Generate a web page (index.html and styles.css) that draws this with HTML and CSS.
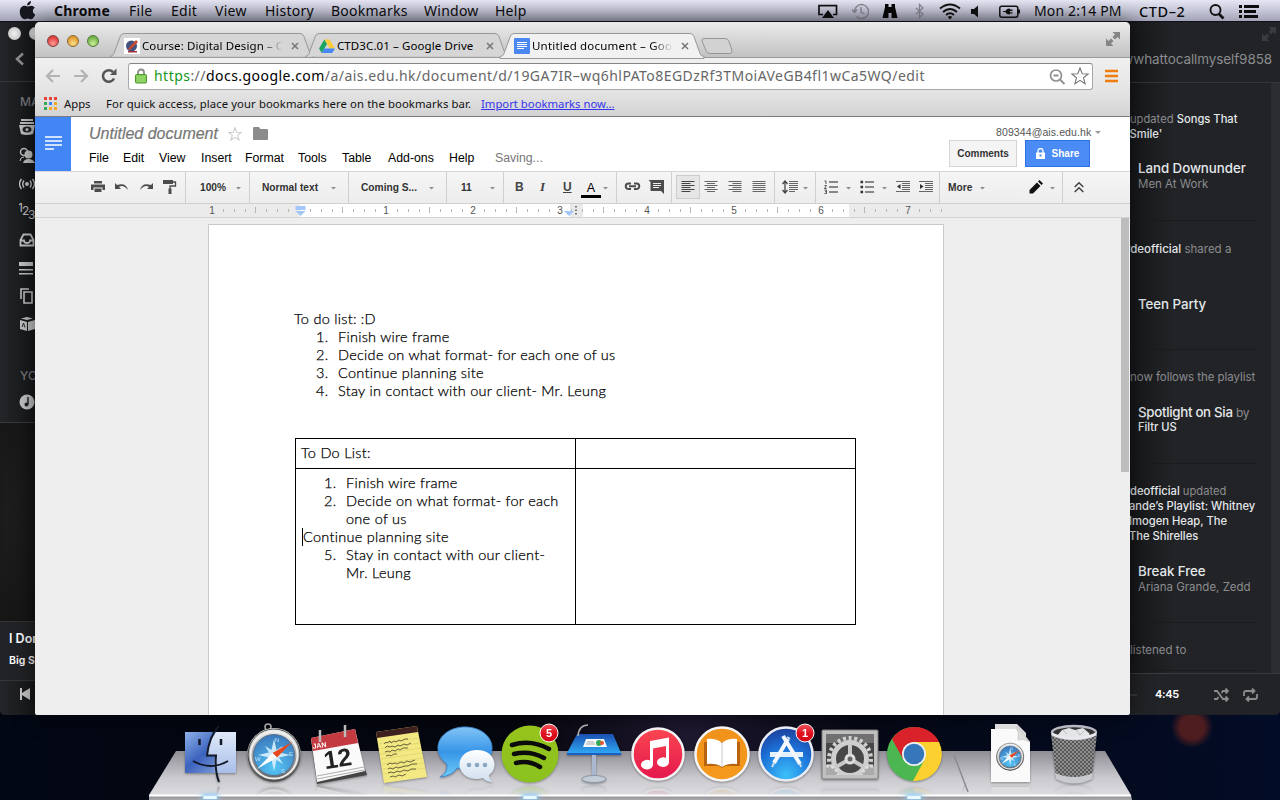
FILE: index.html
```html
<!DOCTYPE html>
<html lang="en">
<head>
<meta charset="utf-8">
<title>Untitled document</title>
<link rel="stylesheet" href="styles.css">
</head>
<body>
<svg class="defs" width="0" height="0">
  <defs>
    <linearGradient id="finder" x1="0" y1="0" x2="1" y2="1"><stop offset="0" stop-color="#8db0ea"/><stop offset=".45" stop-color="#3b63bd"/><stop offset="1" stop-color="#9fb7e6"/></linearGradient>
    <linearGradient id="finder2" x1="0" y1="0" x2="0" y2="1"><stop offset="0" stop-color="#dfe9f9"/><stop offset="1" stop-color="#a9bfe9"/></linearGradient>
    <linearGradient id="steel" x1="0" y1="0" x2="0" y2="1"><stop offset="0" stop-color="#f4f4f4"/><stop offset=".5" stop-color="#a5a5a5"/><stop offset="1" stop-color="#5c5c5c"/></linearGradient>
    <radialGradient id="compass" cx=".5" cy=".8" r=".8"><stop offset="0" stop-color="#55c6f7"/><stop offset="1" stop-color="#3b78bb"/></radialGradient>
    <linearGradient id="bubble" x1="0" y1="0" x2="0" y2="1"><stop offset="0" stop-color="#82c4f6"/><stop offset=".5" stop-color="#3795e8"/><stop offset="1" stop-color="#6fcdfa"/></linearGradient>
    <linearGradient id="bubble2" x1="0" y1="0" x2="0" y2="1"><stop offset="0" stop-color="#fff"/><stop offset="1" stop-color="#cfdfee"/></linearGradient>
    <linearGradient id="green" x1="0" y1="0" x2="0" y2="1"><stop offset="0" stop-color="#97c31c"/><stop offset="1" stop-color="#8bc21f"/></linearGradient>
    <linearGradient id="badge" x1="0" y1="0" x2="0" y2="1"><stop offset="0" stop-color="#f55a5f"/><stop offset=".5" stop-color="#e0101f"/><stop offset="1" stop-color="#d40b1a"/></linearGradient>
    <linearGradient id="desk" x1="0" y1="0" x2="0" y2="1"><stop offset="0" stop-color="#1a50b0"/><stop offset="1" stop-color="#2fa6f2"/></linearGradient>
    <linearGradient id="itunes" x1="0" y1="0" x2="0" y2="1"><stop offset="0" stop-color="#fb4650"/><stop offset="1" stop-color="#e4174e"/></linearGradient>
    <linearGradient id="books" x1="0" y1="0" x2="0" y2="1"><stop offset="0" stop-color="#f0921b"/><stop offset="1" stop-color="#f59a1c"/></linearGradient>
    <radialGradient id="store" cx=".5" cy=".9" r=".9"><stop offset="0" stop-color="#3cc0fb"/><stop offset=".6" stop-color="#1c6fd6"/><stop offset="1" stop-color="#1c3f9a"/></radialGradient>
    <pattern id="mesh" width="4" height="4" patternUnits="userSpaceOnUse"><rect width="4" height="4" fill="#3d3d3d"/><path d="M0 1q1-1 2 0t2 0M0 3q1 1 2 0t2 0" stroke="#b5b5b5" stroke-width=".9" fill="none"/></pattern>
    <pattern id="ticks" x="177" y="0" width="87" height="14" patternUnits="userSpaceOnUse"><path d="M11.500 5v3M22.500 5v3M33.500 5v3M54.500 5v3M65.500 5v3M76.500 5v3M43.500 3v6" stroke="#b5b5b5"/></pattern>
    <g id="safari">
      <circle cx="32" cy="33" r="27" fill="url(#steel)"/><circle cx="32" cy="33" r="26" fill="none" stroke="#4a4a4a"/><circle cx="32" cy="33" r="23.5" fill="none" stroke="#eee" stroke-width="2"/>
      <circle cx="32" cy="33" r="20.500" fill="url(#compass)" stroke="#5a6f86"/>
      <path d="M32 17l2.500 11 6.500-4-4 6.500 11 2.500-11 2.500 4 6.500-6.500-4-2.500 11-2.500-11-6.500 4 4-6.500-11-2.500 11-2.500-4-6.500 6.500 4z" fill="#d9f1fd" opacity=".9"/>
      <path d="M50 20L35 35.500l-4.500-4.500z" fill="#e8481c"/><path d="M28 47l0 0-1 1 8-12.500-4.500-4.500z" fill="#fff" opacity="0"/><path d="M15 47l15.500-16 4.500 4.500z" fill="#fff"/>
      <text x="35" y="20" font-size="6" fill="#bfe4fb" text-anchor="middle">N</text><text x="41" y="51" font-size="6" fill="#bfe4fb" text-anchor="middle">S</text><text x="13" y="39" font-size="6" fill="#bfe4fb">W</text><text x="47" y="34" font-size="6" fill="#bfe4fb">E</text>
    </g>
    <g id="drop"><path d="M0 0h5l-2.500 2.500z" fill="#8c8c8c"/></g>
  </defs>
</svg>

<header class="menubar">
  <svg width="17" height="20" viewBox="0 0 17 20"><path d="M12 0c0 3-2 4.500-4 4.500C8 2 10 .4 12 0zM8.500 5.500c1 0 2-.8 3.500-.8 1.600 0 3 .8 3.800 2-2.800 1.700-2.400 5.600.5 6.800-.7 2-2.300 4.700-4.100 4.700-1.300 0-1.700-.8-3.400-.8s-2.100.8-3.300.8C3 18.200.8 14.200.8 10.700.8 7 3.100 4.800 5.300 4.800c1.300 0 2.200.7 3.200.7z" fill="#16181f"/></svg>
  <b>Chrome</b><span>File</span><span>Edit</span><span>View</span><span>History</span><span>Bookmarks</span><span>Window</span><span>Help</span>
  <svg width="20" height="20" viewBox="0 0 20 20"><path d="M5 13.500H1V4.700h17.500v8.800h-3.500" fill="none" stroke="#111" stroke-width="1.700"/><path d="M10 9l6 8H4z" fill="#111"/></svg>
  <svg width="17" height="20" viewBox="0 0 17 20"><path d="M2.500 10.500a7 7 0 1 1 2 5M9 6v5l3.500 2M0 8.500l2.500 3 2.500-3" fill="none" stroke="#85868f" stroke-width="1.400"/></svg>
  <svg width="17" height="20" viewBox="0 0 17 20"><path d="M3 3h3.500v3h3V3H13v3l2.500 11h-6v-5h-3v5H.5L3 6z" fill="#080808"/></svg>
  <svg width="10" height="20" viewBox="0 0 10 20"><path d="M1 7l7 6-3.500 3.500v-13L8 7l-7 6" fill="none" stroke="#868792" stroke-width="1.200"/></svg>
  <svg width="22" height="20" viewBox="0 0 22 20"><path d="M1 7.500q10-8 20 0M4 11q7-6 14 0M7 14q4-3.500 8 0" fill="none" stroke="#111" stroke-width="2"/><path d="M8.800 16q2.200-2 4.400 0L11 18.500z" fill="#111"/></svg>
  <svg width="12" height="20" viewBox="0 0 12 20"><path d="M1 8h3l4-3.500v12L4 13H1z" fill="#111"/></svg>
  <svg width="23" height="20" viewBox="0 0 23 20"><rect x="1.800" y="5.200" width="18" height="11" rx="2" fill="none" stroke="#111" stroke-width="1.500"/><path d="M20 8.500h2v4h-2zM5 10h2.500q.5-2.500 4.500-2.500v1h2.500V10H12v1.300h2.500v1.200H12v1q-4 0-4.500-2.500H5z" fill="#111"/></svg>
  <span class="clock">Mon 2:14 PM</span><span class="user">CTD–2</span>
  <svg width="16" height="20" viewBox="0 0 16 20"><circle cx="6.500" cy="9" r="5" fill="none" stroke="#111" stroke-width="1.900"/><path d="M10 13l4.500 4.500" stroke="#111" stroke-width="2.600"/></svg>
  <svg width="22" height="20" viewBox="0 0 22 20"><path d="M1 5.500h3M1 10.500h3M1 15.500h3M6 5.500h15M6 10.500h12M6 15.500h14" stroke="#0b0b0b" stroke-width="3"/></svg>
</header>

<section class="player">
  <div class="side">
    <div class="side-head"><div class="dots"><i></i><i></i></div><svg width="10" height="14" viewBox="0 0 10 14"><path d="M8 1.500L2 7l6 5.500" fill="none" stroke="#8f8f90" stroke-width="2.500"/></svg></div>
    <nav class="side-nav">
      <span>MAIN</span>
      <svg viewBox="0 0 16 20"><path d="M2 2h12M1 5h14" stroke="#c3c4c5" stroke-width="2"/><path d="M0 7h16l-2 9q-6 2-12 0z" fill="#c3c4c5"/><ellipse cx="8" cy="11.500" rx="4.500" ry="3" fill="#222326"/><circle cx="8" cy="11.500" r="1.500" fill="#c3c4c5"/></svg>
      <svg viewBox="0 0 16 20"><circle cx="5" cy="6" r="3.500" fill="none" stroke="#c3c4c5" stroke-width="1.500"/><circle cx="9.500" cy="8.500" r="4" fill="#c3c4c5"/><path d="M1 15q0-4 4-4" fill="none" stroke="#c3c4c5"/><path d="M4 17q1-4 5.500-4t6.500 4z" fill="#c3c4c5"/></svg>
      <svg viewBox="0 0 16 20"><circle cx="8" cy="10" r="2" fill="#c3c4c5"/><path d="M5 6.500q-2.500 3.500 0 7M2.500 5q-4 5 0 10M11 6.500q2.500 3.500 0 7M13.500 5q4 5 0 10" fill="none" stroke="#c3c4c5" stroke-width="1.400"/></svg>
      <svg viewBox="0 0 16 20" class="digits"><text x="-1" y="10">1</text><text x="3" y="13">2</text><text x="9" y="17">3</text></svg>
      <svg viewBox="0 0 16 20"><path d="M1.500 15.500V10l3-5.500h7l3 5.500v5.500zM1.500 10.500H5q0 2.500 3 2.500t3-2.500h3.500" fill="none" stroke="#c3c4c5" stroke-width="1.800"/></svg>
      <svg viewBox="0 0 16 20"><path d="M0 4h14v4H0zM0 11h14v1.500H0zM0 15h14v1.500H0z" fill="#c3c4c5"/></svg>
      <svg viewBox="0 0 16 20"><path d="M5 6h8v11H5zM2 13V3h8" fill="none" stroke="#c3c4c5" stroke-width="1.600"/></svg>
      <svg viewBox="0 0 16 20"><path d="M1 6l7 2v9l-7-2zM9 8l7-2v9l-7 2zM2 4.500L8 3l6 1.500L8 6z" fill="#c3c4c5"/><path d="M3 13l1.500-4L6 13.500" stroke="#222326" fill="none"/></svg>
      <span class="yours">YOUR</span>
      <svg class="note" viewBox="0 0 16 20"><circle cx="8" cy="10" r="7.500" fill="#c3c4c5"/><path d="M9 5v7" stroke="#222326" stroke-width="1.500"/><circle cx="7.500" cy="12.500" r="2" fill="#222326"/></svg>
    </nav>
    <div class="art"></div>
    <div class="now"><b>I Don't</b><b class="artist">Big Sean</b></div>
    <div class="prev"><svg width="13" height="14" viewBox="0 0 13 14"><path d="M1 1h2v5l8-5v12L3 8v5H1z" fill="#c9c9c9"/></svg></div>
  </div>
  <div class="feed">
    <div class="feed-head">
      <svg width="14" height="14" viewBox="0 0 14 14"><path d="M6.500 0H14v7.500L11.500 5 9 7.500 6.500 5 9 2.500zM7.500 14H0V6.500L2.500 9 5 6.500 7.500 9 5 11.500z" fill="#3a3b3e"/></svg>
      <p>wwhattocallmyself9858</p>
    </div>
    <div class="feed-list">
      <article class="f1"><p>updated <b>Songs That</b></p><p><b class="cut">'Smile'</b></p><h3>Land Downunder</h3><p class="by">Men At Work</p></article>
      <article class="f2"><p><b class="cut">rdeofficial</b> shared a</p><h3>Teen Party</h3></article>
      <article class="f3"><p>now follows the playlist</p><h3>Spotlight on Sia <small>by</small></h3><p class="by"><b>Filtr US</b></p></article>
      <article class="f4"><p><b class="cut">rdeofficial</b> updated</p><p><b class="near">ande’s Playlist: Whitney</b></p><p><b class="near">Imogen Heap, The</b></p><p><b class="near">The Shirelles</b></p><h3>Break Free</h3><p class="by">Ariana Grande, Zedd</p></article>
      <article class="f5"><p>listened to</p></article>
    </div>
    <div class="feed-foot"><i></i><b>4:45</b>
      <svg width="15" height="14" viewBox="0 0 15 14"><path d="M0 3h3l6 8h5M0 11h3l1.500-2M7.500 5L9 3h5M11.500.5L14 3l-2.500 2.500M11.500 8.500L14 11l-2.500 2.500" fill="none" stroke="#8b8c8e" stroke-width="1.800"/></svg>
      <svg width="15" height="14" viewBox="0 0 15 14"><path d="M1 8V5q0-2 2-2h8M14 6v3q0 2-2 2H4M9 .5L11.500 3 9 5.500M6 8.500L3.500 11 6 13.500" fill="none" stroke="#8b8c8e" stroke-width="1.800"/></svg>
    </div>
  </div>
</section>

<main class="browser">
  <div class="tabstrip">
    <div class="lights"><i class="red"></i><i class="amber"></i><i class="lime"></i></div>
    <div class="tab">
      <svg class="shape" viewBox="0 0 204 24"><path d="M0 23.500q3 0 4-3L10 4q1-3.500 4-3.500h176q3 0 4 3L200 20.500q1 3 4 3"/></svg>
      <svg width="16" height="16" viewBox="0 0 16 16"><path d="M0 0h16v16H0z" fill="#fff"/><circle cx="7.500" cy="8" r="5.500" fill="#44537d"/><path d="M4 11L12 2l2 2-8 8z" fill="#c94a31"/><path d="M4 13h9v1.500H4z" fill="#a32d33"/></svg>
      <span class="fade">Course: Digital Design – CTD</span><svg class="x" viewBox="0 0 8 8"><path d="M1 1l6 6M7 1L1 7"/></svg>
    </div>
    <div class="tab">
      <svg class="shape" viewBox="0 0 204 24"><path d="M0 23.500q3 0 4-3L10 4q1-3.500 4-3.500h176q3 0 4 3L200 20.500q1 3 4 3"/></svg>
      <svg width="16" height="16" viewBox="0 0 16 16"><path d="M5.300 1.500h5.400L16 10.500h-5.300z" fill="#fbc93c"/><path d="M5.300 1.500L8 6.200 2.700 15 0 10.500z" fill="#1da463"/><path d="M5.300 10.500H16L13.300 15H2.700z" fill="#4687f4"/></svg>
      <span>CTD3C.01 – Google Drive</span><svg class="x" viewBox="0 0 8 8"><path d="M1 1l6 6M7 1L1 7"/></svg>
    </div>
    <div class="tab on">
      <svg class="shape" viewBox="0 0 204 25"><path d="M0 23.500q3 0 4-3L10 4q1-3.500 4-3.500h176q3 0 4 3L200 20.500q1 3 4 3v2H0z"/></svg>
      <svg width="16" height="16" viewBox="0 0 16 16"><rect width="16" height="16" rx="1" fill="#4b87f3"/><path d="M3 4.500h10M3 6.500h10M3 8.500h10M3 10.500h7" stroke="#fff" stroke-width="1.200"/></svg>
      <span class="fade">Untitled document – Google</span><svg class="x" viewBox="0 0 8 8"><path d="M1 1l6 6M7 1L1 7"/></svg>
    </div>
    <svg class="newtab" width="32" height="16" viewBox="0 0 32 16"><path d="M3 .5h21q3 0 4 3l3 9q.5 3-2 3H9q-3 0-4-3L1 3q-.5-2.500 2-2.500z" fill="#d2d2d2" stroke="#959595"/></svg>
    <svg class="full" width="14" height="14" viewBox="0 0 14 14"><path d="M6.500 0H14v7.500L11.500 5 9 7.500 6.500 5 9 2.500zM7.500 14H0V6.500L2.500 9 5 6.500 7.500 9 5 11.500z" fill="#858585"/></svg>
  </div>

  <div class="navbar">
    <svg width="16" height="14" viewBox="0 0 16 14"><path d="M8 1L2 7l6 6M2.500 7H15" fill="none" stroke="#b3b3b3" stroke-width="2.200"/></svg>
    <svg width="16" height="14" viewBox="0 0 16 14"><path d="M8 1l6 6-6 6M13.500 7H1" fill="none" stroke="#b3b3b3" stroke-width="2.200"/></svg>
    <svg width="16" height="16" viewBox="0 0 16 16"><path d="M13 10.500A5.800 5.800 0 1 1 12 4" fill="none" stroke="#555" stroke-width="2.600"/><path d="M15.500.5V7H9z" fill="#555"/></svg>
    <div class="omnibox">
      <svg width="12" height="16" viewBox="0 0 12 16"><path d="M3 8V4.500a3 3 0 0 1 6 0V8" fill="none" stroke="#8b8b8b" stroke-width="1.800"/><rect x=".5" y="6.500" width="11" height="8.500" rx="1" fill="#82cc57" stroke="#4d9a2e"/><path d="M2 9h8M2 11h8M2 13h8" stroke="#a6e080" stroke-width=".8"/></svg>
      <p><em>https</em>://<strong>docs.google.com</strong>/a/ais.edu.hk/document/d/19GA7IR–wq6hlPATo8EGDzRf3TMoiAVeGB4fl1wCa5WQ/edit</p>
      <svg width="17" height="17" viewBox="0 0 17 17"><circle cx="7" cy="7.500" r="5.500" fill="none" stroke="#909090" stroke-width="1.700"/><path d="M4.500 7.500h5M11 11.500l4.500 4.500" stroke="#909090" stroke-width="1.800"/></svg>
      <svg width="18" height="18" viewBox="0 0 18 18"><path d="M9 1l2.200 5.700 6 .3-4.700 3.800 1.600 6L9 13.400l-5.100 3.400 1.600-6L.8 7l6-.3z" fill="#fff" stroke="#777" stroke-width="1.100"/></svg>
    </div>
    <svg width="14" height="14" viewBox="0 0 14 14"><path d="M0 2h13M0 7h13M0 12h13" stroke="#ef7d0f" stroke-width="2.600"/></svg>
  </div>

  <div class="bookmarks">
    <svg width="13" height="13" viewBox="0 0 13 13"><path d="M0 0h3v3H0zM5 0h3v3H5zM10 0h3v3h-3z" fill="#ea4335"/><path d="M0 5h3v3H0zM0 10h3v3H0z" fill="#34a853"/><path d="M5 5h3v3H5z" fill="#4285f4"/><path d="M10 5h3v3h-3zM5 10h3v3H5zM10 10h3v3h-3z" fill="#f9a825"/></svg>
    <span>Apps</span><span class="hint">For quick access, place your bookmarks here on the bookmarks bar.</span><a>Import bookmarks now...</a>
  </div>

  <div class="docs-head">
    <div class="docs-logo"><svg width="18" height="14" viewBox="0 0 18 14"><path d="M0 1h17M0 5h17M0 9h17M0 13h9" stroke="#fff" stroke-width="1.700"/></svg></div>
    <div class="docs-mid">
      <div class="title"><i>Untitled document</i>
        <svg width="14" height="14" viewBox="0 0 18 18"><path d="M9 1l2.200 5.700 6 .3-4.700 3.800 1.600 6L9 13.400l-5.100 3.400 1.600-6L.8 7l6-.3z" fill="#fff" stroke="#c9c9c9" stroke-width="1.300"/></svg>
        <svg width="15" height="13" viewBox="0 0 15 13"><path d="M1 0h5l1.500 2H14q1 0 1 1v9q0 1-1 1H1q-1 0-1-1V1q0-1 1-1z" fill="#8c8c8c"/></svg></div>
      <nav class="menus"><span>File</span><span>Edit</span><span>View</span><span>Insert</span><span>Format</span><span>Tools</span><span>Table</span><span>Add-ons</span><span>Help</span><span class="saving">Saving...</span></nav>
    </div>
    <div class="docs-right">
      <div class="account">809344@ais.edu.hk <svg width="6" height="3"><path d="M0 0h6L3 3z" fill="#999"/></svg></div>
      <div class="buttons"><button class="comments">Comments</button><button class="share"><svg width="9" height="11" viewBox="0 0 9 11"><path d="M2 5V3a2.500 2.500 0 0 1 5 0v2" fill="none" stroke="#fff" stroke-width="1.300"/><path d="M0 4.500h9V11H0z" fill="#fff"/><path d="M3.500 6.500h2v2h-2z" fill="#4886ee"/></svg>Share</button></div>
    </div>
  </div>

  <div class="toolbar">
    <div class="g g1">
      <svg viewBox="0 0 14 14"><path d="M3 1h8v2.500H3zM0 4.500h14V10h-2.500V7.500h-9V10H0zM3.500 8.500h7V12h-7z" fill="#4c4c4c"/></svg>
      <svg viewBox="0 0 14 14"><path d="M0 3v6h6L4 7q4-3 9 3-2-8-11-5z" fill="#4c4c4c"/></svg>
      <svg viewBox="0 0 14 14"><path d="M14 3v6H8l2-2q-4-3-9 3 2-8 11-5z" fill="#4c4c4c"/></svg>
      <svg viewBox="0 0 14 14"><path d="M0 0h10v4H0z" fill="#4c4c4c"/><path d="M10 2h2.500v4H7v3" fill="none" stroke="#4c4c4c" stroke-width="1.300"/><path d="M5.500 8.500h3V14h-3z" fill="#4c4c4c"/></svg>
    </div>
    <div class="g g2"><b>100%</b><svg class="dd"><use href="#drop"/></svg></div>
    <div class="g g3"><b>Normal text</b><svg class="dd"><use href="#drop"/></svg></div>
    <div class="g g4"><b>Coming S...</b><svg class="dd"><use href="#drop"/></svg></div>
    <div class="g g5"><b>11</b><svg class="dd"><use href="#drop"/></svg></div>
    <div class="g g6"><b>B</b><i>I</i><u>U</u><span class="colour">A</span><svg class="dd"><use href="#drop"/></svg></div>
    <div class="g g7">
      <svg width="17" height="14" viewBox="0 0 17 14"><path d="M7 3.500H4.500a2.500 2.500 0 0 0 0 5.500H7M10 3.500h2.500a2.500 2.500 0 0 1 0 5.500H10M5 6.300h7" fill="none" stroke="#4c4c4c" stroke-width="2"/></svg>
      <svg width="16" height="14" viewBox="0 0 16 14"><path d="M0 0h15.500v14L12.500 11H2V2z" fill="#4c4c4c"/><path d="M4.500 3.500h8M4.500 5.500h8M4.500 7.500h6" stroke="#eee"/></svg>
    </div>
    <div class="g g8">
      <span class="pressed"><svg viewBox="0 0 14 14"><path d="M.5 1.500h13M.5 3.500h9M.5 5.500h13M.5 7.500h9M.5 9.500h13M.5 11.500h9" stroke="#444"/></svg></span>
      <svg viewBox="0 0 14 14"><path d="M.5 1.500h13M3 3.500h8M.5 5.500h13M3 7.500h8M.5 9.500h13M3 11.500h8" stroke="#666"/></svg>
      <svg viewBox="0 0 14 14"><path d="M.5 1.500h13M4.500 3.500h9M.5 5.500h13M4.500 7.500h9M.5 9.500h13M4.500 11.500h9" stroke="#666"/></svg>
      <svg viewBox="0 0 14 14"><path d="M.5 1.500h13M.5 3.500h13M.5 5.500h13M.5 7.500h13M.5 9.500h13M.5 11.500h13" stroke="#666"/></svg>
    </div>
    <div class="g g9"><svg width="16" height="14" viewBox="0 0 16 14"><path d="M3 2v10M.5 4L3 1l2.500 3M.5 10L3 13l2.500-3" fill="none" stroke="#444" stroke-width="1.300"/><path d="M7 1.500h9M7 3.500h9M7 5.500h9M7 7.500h9M7 9.500h9M7 11.500h6" stroke="#666"/></svg><svg class="dd"><use href="#drop"/></svg></div>
    <div class="g g10">
      <svg viewBox="0 0 14 14"><path d="M5 2h9M5 7h9M5 12h9" stroke="#666" stroke-width="1.500"/><path d="M.5 1H2v3M.5 5.500h2l-2 3h2M.5 10h2v3.500h-2M1 11.700h1.500" stroke="#444" fill="none" stroke-width=".9"/></svg><svg class="dd"><use href="#drop"/></svg>
      <svg viewBox="0 0 14 14"><path d="M5 2h9M5 7h9M5 12h9" stroke="#666" stroke-width="1.500"/><path d="M.5 .7h2.600v2.600H.5zM.5 5.700h2.600v2.600H.5zM.5 10.700h2.600v2.600H.5z" fill="#333"/></svg><svg class="dd"><use href="#drop"/></svg>
      <svg viewBox="0 0 14 14"><path d="M0 1.500h14M6 3.500h8M6 5.500h8M6 7.500h8M6 9.500h8M0 11.500h14" stroke="#666"/><path d="M4.500 4v5L1 6.500z" fill="#333"/></svg>
      <svg viewBox="0 0 14 14"><path d="M0 1.500h14M6 3.500h8M6 5.500h8M6 7.500h8M6 9.500h8M0 11.500h14" stroke="#666"/><path d="M1 4v5l3.500-2.500z" fill="#333"/></svg>
    </div>
    <div class="g g11"><b>More</b><svg class="dd"><use href="#drop"/></svg>
      <svg class="pencil" viewBox="0 0 14 14"><path d="M.5 10l7.500-7.500 3.500 3.500L4 13.500H.5zM9 1.500L10.500 0l3.500 3.500L12.500 5z" fill="#111"/></svg><svg class="dd"><use href="#drop"/></svg></div>
    <div class="g g12"><svg width="10" height="12" viewBox="0 0 10 12"><path d="M.7 6L5 1.700 9.300 6M.7 11L5 6.700 9.300 11" fill="none" stroke="#444" stroke-width="1.500"/></svg></div>
  </div>

  <svg class="ruler" width="1095" height="14" viewBox="0 0 1095 13">
    <path d="M265 0h270v13H265zM548 0h266v13H548z" fill="#fff"/><path d="M535 0h13v13h-13z" fill="#e9e9e9"/>
    <rect x="177" width="731" height="13" fill="url(#ticks)"/>
    <g><text x="177" y="9.500">1</text><text x="351" y="9.500">1</text><text x="438" y="9.500">2</text><text x="525" y="9.500">3</text><text x="612" y="9.500">4</text><text x="699" y="9.500">5</text><text x="786" y="9.500">6</text><text x="873" y="9.500">7</text></g>
    <path d="M260.500 2h10v4h-10zM260.500 7h10l-5 5zM529 7h10l-5 5z" fill="#a3c7f8"/><path d="M541 2v10" stroke="#777" stroke-width="2" stroke-dasharray="1.500 2"/>
  </svg>

  <div class="canvas">
    <div class="page">
      <p>To do list: :D</p>
      <ol><li>Finish wire frame</li><li>Decide on what format- for each one of us</li><li>Continue planning site</li><li>Stay in contact with our client- Mr. Leung</li></ol>
      <table>
        <tr class="r1"><td><p>To Do List:</p></td><td></td></tr>
        <tr class="r2"><td><ol><li>Finish wire frame</li><li>Decide on what format- for each<br>one of us</li></ol><p class="caret">Continue planning site</p><ol start="5"><li>Stay in contact with our client-<br>Mr. Leung</li></ol></td><td></td></tr>
      </table>
    </div>
    <div class="thumb"></div>
  </div>
</main>

<footer class="dock">
  <div class="shelf"></div>
  <div class="apps">
    <svg viewBox="0 0 64 64"><rect x="7" y="10" width="51" height="41" fill="url(#finder)"/><path d="M38 10h20v41H37q-1-8 0-17h-8q1-14 9-24z" fill="url(#finder2)"/><path d="M41 4C32 13 30 25 29 33.500h9C37 44 38 52 41 60M15 39q18 10 35 0" fill="none" stroke="#111827" stroke-width="2"/><path d="M21.500 17v6M43 17v6" stroke="#111827" stroke-width="2.500"/></svg>
    <svg viewBox="0 0 64 64"><circle cx="26" cy="5" r="3" fill="none" stroke="#aaa" stroke-width="1.500"/><use href="#safari"/></svg>
    <svg viewBox="0 0 64 64"><path d="M5 18l6 44 50-9-2-6z" fill="#444"/><path d="M5 16L49 7l10 42-48 11z" fill="#fafafa"/><path d="M5 16L49 7l3 14L7 29z" fill="#c33a40"/><path d="M11 54l47-9M11 57l47-9" stroke="#999" stroke-width=".8"/><path d="M14 20V8M39 15V3" stroke="#bbb" stroke-width="2.500"/><g transform="rotate(-9 32 32)"><text x="8" y="23" font-size="7" font-weight="bold" fill="#fff">JAN</text><text x="31" y="45" font-size="25" font-weight="bold" fill="#222" text-anchor="middle">12</text></g></svg>
    <svg viewBox="0 0 64 64"><path d="M6 10l41-6 10 51-43 6z" fill="#f3e982"/><path d="M6 10l41-6 1 6L7 16z" fill="#3e211e"/><path d="M8 22l41-6M9 27l41-6M10 32l41-6M11 37l41-6M12 42l41-6M13 47l41-6M13 52l42-6" stroke="#d3c46a" stroke-width=".5"/><path d="M14 22l2-2 1 1 3-2 1 2 3-2 2 1 3-2 2 1 4-2 3 0M15 26l2-2 3 1 2-1 3 1 3-2 2 1 4-2 3 1 4-2M15 30l3-1 2 1 2-2 3 1 3-2 2 1 3-2 5 0M16 34l3-1 2 1 3-2 3 0M17 43l3-2 2 1 3-1 2 1 4-2 3 1 3-2 3 1 5-2M18 47l2-1 3 1 3-2 2 1 4-1 3-1 3 0 4-2 5 0M18 51l3-1 3 1 3-2 3 1 4-2 4 1 3-2 5 0M20 55l3-1 2 1 4-2 3 1 4-2" fill="none" stroke="#5b5436" stroke-width=".9"/></svg>
    <svg viewBox="0 0 64 64"><path d="M31 5c15 0 27 9 27 21S46 47 31 47q-4 0-8-1-5 8-17 9 8-4 7-13C7 38 4 32 4 26 4 14 16 5 31 5z" fill="url(#bubble)" stroke="#438ad0"/><path d="M43 28c10 0 17.500 6 17.500 14.500 0 5-2 8-5.500 10.500q0 4 4 7-7 0-10-4-3 1-6 1c-10 0-17.500-6-17.500-14.500S33 28 43 28z" fill="url(#bubble2)"/><g fill="#89a8c6"><circle cx="35" cy="43" r="2.300"/><circle cx="43" cy="43" r="2.300"/><circle cx="51" cy="43" r="2.300"/></g></svg>
    <svg viewBox="0 0 64 64"><circle cx="32" cy="32" r="28.500" fill="url(#green)"/><path d="M14 23q19-6 37 4M16 32q16-4 30 4M18 41q13-3 24 4" fill="none" stroke="#0b0b0b" stroke-linecap="round" stroke-width="4.500"/><circle cx="51" cy="11" r="9" fill="url(#badge)" stroke="#fff"/><text x="51" y="15" font-size="11" font-weight="bold" fill="#fff" text-anchor="middle">5</text></svg>
    <svg viewBox="0 0 64 64"><path d="M30 31h4v26h-4z" fill="#a9b8cf"/><ellipse cx="32" cy="57" rx="12" ry="3.500" fill="#c4ccd8" stroke="#8c98aa"/><path d="M15 12h36l8 19H5z" fill="url(#desk)"/><path d="M5 31h54v2H5z" fill="#1b5fc0"/><path d="M24 17h18l3 8H21z" fill="#f3f8ff"/><circle cx="37" cy="21" r="3" fill="#35a853"/><circle cx="40" cy="21" r="2" fill="#ea5535"/><path d="M24 22h9M25 20h7" stroke="#aaa"/><path d="M16 14q1-11 10-11" fill="none" stroke="#aaa" stroke-width="1.700"/></svg>
    <svg viewBox="0 0 64 64"><circle cx="32" cy="32" r="25.500" fill="url(#itunes)" stroke="#f2f2f4" stroke-width="2.500"/><path d="M24 19l19-3.500v25a6 4.800 0 1 1-3-4.500V24l-13 2.500V43a6 4.800 0 1 1-3-4.500z" fill="#fff"/></svg>
    <svg viewBox="0 0 64 64"><circle cx="32" cy="32" r="26.500" fill="url(#books)" stroke="#f5f5f5" stroke-width="2.500"/><path d="M14 20v24h15l3 2 3-2h15V20z" fill="#b8640e"/><path d="M32 21q-6-5-15-4v25q9-1 15 3 6-4 15-3V17q-9-1-15 4z" fill="#fff"/><path d="M32 21v24" stroke="#c8c8c8"/></svg>
    <svg viewBox="0 0 64 64"><circle cx="32" cy="32" r="26.500" fill="url(#store)" stroke="#e9edf3" stroke-width="2.500"/><path d="M16 30h33v5H16z" fill="#e4effc"/><path d="M34 17L20 41M29 14l17 28" stroke="#f4f8fe" stroke-width="4"/><path d="M33 15l3 2M20 41l-2 4M46 42l1 3" stroke="#cde" stroke-width="2"/><circle cx="51" cy="11" r="9" fill="url(#badge)" stroke="#fff"/><text x="51" y="15" font-size="11" font-weight="bold" fill="#fff" text-anchor="middle">1</text></svg>
    <svg viewBox="0 0 64 64"><rect x="4" y="8" width="56" height="49" rx="1" fill="#bfbfbf" stroke="#7d7d7d"/><rect x="8" y="12" width="48" height="41" fill="#474747"/><path d="M8 12h48v9H8z" fill="#707070"/><svg x="8" y="12" width="48" height="41" viewBox="8 12 48 41"><circle cx="32" cy="37" r="21" fill="none" stroke="#d0d0d0" stroke-width="4" stroke-dasharray="3 2.700"/><circle cx="32" cy="37" r="16.500" fill="none" stroke="#cfcfcf" stroke-width="5"/><path d="M32 37V22M32 37l-14 8M32 37l14 8" stroke="#c8c8c8" stroke-width="4"/><circle cx="32" cy="37" r="5.500" fill="#ddd"/><circle cx="32" cy="37" r="2.500" fill="#666"/><circle cx="10" cy="54" r="10" fill="#aaa" stroke="#ddd" stroke-width="3" stroke-dasharray="3 2"/><circle cx="54" cy="54" r="10" fill="#aaa" stroke="#ddd" stroke-width="3" stroke-dasharray="3 2"/></svg></svg>
    <svg viewBox="0 0 64 64"><circle cx="32" cy="32" r="27" fill="#4cb750"/><path d="M32 5a27 27 0 0 1 25 15H32L21.600 38 10 17A27 27 0 0 1 32 5z" fill="#d9222a"/><path d="M57 20a27 27 0 0 1-26 39L42.400 38 43 26 32 20z" fill="#fcd02f"/><circle cx="32" cy="32" r="12" fill="#f2f2f2"/><circle cx="32" cy="32" r="10.300" fill="#3676bb"/></svg>
    <svg class="divider" viewBox="0 0 32 64"><path d="M8 33l14 37" stroke="#8c8c90" stroke-width="1.500"/></svg>
    <svg viewBox="0 0 64 64"><path d="M17 2h22l9 9v44H17z" fill="#ddd"/><path d="M13 7h24l15 13v40H13z" fill="#fafafa"/><path d="M39 4l13 16q-7-4-12-2 1-7-1-14z" fill="#dcdcdc" stroke="#bbb" stroke-width=".6"/><g transform="translate(15.500 17.500) scale(.52)"><use href="#safari"/></g></svg>
    <svg viewBox="0 0 64 64"><path d="M9 12l5 43q18 10 36 0l5-43z" fill="url(#mesh)"/><path d="M13 51q19 8 38 0l-1 6q-18 9-36 0z" fill="#c9c9d0"/><ellipse cx="32" cy="10.500" rx="22" ry="6.500" fill="#333" stroke="#b9b9c4" stroke-width="2.500"/><path d="M15 14l5-6 7-2 6 2 8-2 6 5 1 3q-16 5-33 0z" fill="#e3e5e6"/><path d="M21 8l4 4M34 8l4 5 4-4" stroke="#bbb" fill="none"/><path d="M10 12q22 9 44 0" stroke="#e9e9ef" stroke-width="2.500" fill="none"/></svg>
  </div>
  <div class="running"><i></i><i></i><i></i></div>
</footer>
</body>
</html>
```
FILE: styles.css
```css
* { box-sizing: border-box; }
body {
  margin: 0; width: 1280px; height: 800px; overflow: hidden; position: relative;
  background: radial-gradient(circle at 1192px 727px, #4d1d20 0 12px, transparent 21px),
    radial-gradient(ellipse at 690px 735px, #1f1830, transparent 170px), linear-gradient(90deg, #020714, #06070d 50%, #030c26);
  font-family: "Liberation Sans", Arial, sans-serif;
}
p, h3, ol { margin: 0; padding: 0; }
svg { display: block; flex: none; }
.defs { position: absolute; }

/* Menu bar */
.menubar {
  height: 22px; padding-left: 19px; display: grid; align-items: center;
  grid-template-columns: 35px 75px 42px 44px 50px 66px 93px 71px 323px 34px 30px 33px 24px 31px 28px 36px 105px 70px 29px 22px;
  background: linear-gradient(#e6e6f4, #c5c6d7 50%, #a2a3b6); border-bottom: 1px solid #10111a;
  font: 14px/20px "Noto Sans", sans-serif; color: #0c0c0e; letter-spacing: .25px; white-space: nowrap;
}
.menubar b { letter-spacing: .2px; }
.menubar .clock { letter-spacing: .15px; }
.menubar .user { font-weight: 500; font-size: 14.500px; letter-spacing: .6px; }

/* Music player window */
.player {
  position: absolute; left: 0; top: 22px; width: 1280px; height: 693px; background: #222326;
  display: flex; justify-content: space-between; border-radius: 0 0 5px 5px; overflow: hidden;
  font-family: Inter, sans-serif;
}
.side { width: 35px; overflow: hidden; background: linear-gradient(90deg, #242528, #17181a); }
.side-head { height: 60px; border-bottom: 1px solid #343538; padding: 5px 0 0 8px; }
.side-head > svg { margin: 12px 0 0 7px; }
.dots { display: flex; gap: 8px; width: 40px; }
.dots i { flex: none; width: 13px; height: 13px; border-radius: 50%; background: radial-gradient(circle, #f4f4f4, #bcbcbc); }
.side-nav { height: 341px; padding: 13px 0 0 19px; border-bottom: 1px solid #3a3a3a; }
.side-nav span { display: block; font: 500 12px/14px Inter, sans-serif; color: #77787b; margin-bottom: 9px; padding-left: 1px; }
.side-nav svg { width: 16px; height: 20px; margin-bottom: 8px; }
.side-nav .yours { margin: 35px 0 9px; }
.digits text { font: 12px Inter, sans-serif; fill: #c3c4c5; }
.art { height: 198px; background: radial-gradient(ellipse at 10px 90px, #1d1d1d, #060606 90px); }
.now { height: 59px; background: #222326; color: #fff; border-top: 1px solid #333; padding: 8px 0 0 9px; white-space: nowrap; font-size: 12.500px; line-height: 18px; }
.now b { display: block; font-weight: 600; }
.now .artist { font-size: 10.500px; line-height: 26px; }
.prev { border-top: 1px solid #353639; padding: 6px 0 0 19px; height: 35px; }

.feed { width: 150px; overflow: hidden; color: #8b8c8f; font-size: 11.500px; line-height: 15px; white-space: nowrap; background: linear-gradient(90deg, #17181a, #222326 45px); }
.feed-head { height: 61px; border-bottom: 1px solid #343538; padding-top: 5px; }
.feed-head svg { margin-left: 132px; }
.feed-head p { margin: 10px 0 0 -8px; width: 150px; font-size: 13.500px; letter-spacing: -.1px; line-height: 16px; text-align: right; }
.feed-list { height: 590px; border-right: 9px solid #2c2d30; }
.feed article { border-bottom: 1px solid #1a1b1d; width: 127px; }
.feed b { color: #e4e8ea; font-weight: 500; }
.feed .cut { margin-left: -4px; }
.feed .near { margin-left: -1px; }
.feed h3 { font: 500 13.300px/18px Inter, sans-serif; color: #e4e8ea; margin-left: 8px; letter-spacing: -.05px; }
.feed small { font-size: 12px; font-weight: 400; color: #8b8c8f; }
.feed .by { margin-left: 8px; font-size: 11.500px; }
.f1 { height: 138px; padding-top: 29px; font-size: 11.200px; }
.f1 h3 { margin-top: 17px; }
.f2 { height: 129px; padding-top: 21px; font-size: 11.500px; }
.f2 h3 { margin-top: 38px; }
.f3 { height: 114px; padding-top: 20px; letter-spacing: -.05px; }
.f3 h3 { margin-top: 18px; letter-spacing: -.3px; }
.feed .f3 .by { margin-top: -2px; font-size: 11.200px; }
.f4 { height: 159px; padding-top: 20px; font-size: 11.200px; }
.f4 h3 { margin-top: 18px; }
.f5 { height: 48px; padding-top: 20px; border: 0; }
.feed-foot { height: 42px; border-top: 1px solid #3a3b3e; display: flex; align-items: center; background: #222326; }
.feed-foot i { width: 7px; height: 2px; background: #393a3d; margin-right: 18px; }
.feed-foot b { width: 59px; color: #fff; font-size: 11px; font-weight: 600; letter-spacing: -.3px; }
.feed-foot svg + svg { margin-left: 14px; }

/* Browser window */
.browser {
  position: absolute; left: 35px; top: 22px; width: 1095px; height: 693px; overflow: hidden;
  border-radius: 5px 5px 3px 3px; background: #eee; box-shadow: 0 0 22px rgba(0,0,0,.6);
  display: flex; flex-direction: column;
}
.tabstrip { height: 36px; flex: none; display: flex; align-items: flex-end; background: linear-gradient(#ebebeb, #c2c2c2); border-bottom: 1px solid #9a9a9a; }
.lights { display: flex; gap: 8px; padding: 0 11px 10px 12px; width: 79px; flex: none; }
.lights i { width: 12px; height: 12px; flex: none; border-radius: 50%; border: 1px solid #7c4443; }
.red { background: radial-gradient(circle at 50% 75%, #ff9d95, #df3c3c 70%); }
.lights .amber { background: radial-gradient(circle at 50% 75%, #ffe08a, #dd9a2f 70%); border-color: #886832; }
.lights .lime { background: radial-gradient(circle at 50% 75%, #cdf19a, #6fb045 70%); border-color: #55793c; }
.tab { position: relative; width: 203px; height: 24px; margin: 0 -4px; padding-left: 14px; display: flex; align-items: center; flex: none; font: 11.500px/16px "Noto Sans", sans-serif; letter-spacing: .1px; }
.tab > * { position: relative; top: 1px; }
.tab .shape { position: absolute; left: 0; top: 0; width: 204px; height: 24px; fill: #d6d6d6; stroke: #989898; overflow: visible; }
.tab.on { z-index: 1; margin-bottom: -1px; height: 25px; letter-spacing: .2px; }
.tab.on > :not(.shape) { top: 0; }
.tab.on .shape { fill: #f1f1f1; height: 25px; }
.tab span { width: 143px; padding-left: 2px; margin-right: 8px; white-space: nowrap; overflow: hidden; }
.fade { mask-image: linear-gradient(90deg, #000 85%, transparent); }
.x { width: 8px; height: 8px; stroke: #777; stroke-width: 1.500; }
.newtab { margin: 0 0 3px 2px; }
.full { margin: 0 10px 11px auto; }

.navbar { height: 36px; flex: none; display: flex; align-items: center; padding: 0 11px 0 10px; background: linear-gradient(#f0f0f0, #e3e3e3); }
.navbar > svg { margin-right: 12px; }
.omnibox { flex: 1; height: 27px; margin-left: -1px; background: #fff; border: 1px solid #a8a8a8; border-top-color: #858585; border-radius: 3px; display: flex; align-items: center; padding: 0 3px 0 6px; }
.omnibox p { flex: 1; padding-left: 7px; font: 14px/22px "Noto Sans", sans-serif; letter-spacing: .46px; color: #666; white-space: nowrap; }
.omnibox em { font-style: normal; color: #159a1b; }
.omnibox strong { font-weight: 400; color: #000; }
.omnibox svg + svg { margin-left: 5px; }
.navbar > .omnibox + svg { margin: 0 0 0 12px; }

.bookmarks { height: 23px; flex: none; display: grid; grid-template-columns: 20px 42px 375px auto; align-items: center; padding: 0 0 3px 9px; background: linear-gradient(#e2e2e2, #d3d3d3); border-bottom: 1px solid #7d7d7d; font: 11.300px/16px "Noto Sans", sans-serif; color: #111; white-space: nowrap; }
.hint { letter-spacing: .1px; }
.bookmarks a { color: #3434ee; text-decoration: underline; }

/* Document header */
.docs-head { height: 54px; flex: none; display: flex; background: #fff; }
.docs-logo { width: 36px; background: #4285f4; padding: 19px 0 0 10px; }
.docs-mid { flex: 1; padding: 7px 0 0 18px; }
.title { display: flex; align-items: center; height: 19px; color: #777; font-size: 16px; line-height: 19px; }
.title i { width: 139px; -webkit-text-stroke: .2px #777; }
.title svg:last-child { margin-left: 11px; }
.menus { display: grid; grid-template-columns: 34px 36px 42px 44px 53px 44px 46px 61px 46px 60px; margin-top: 8px; font-size: 12.300px; line-height: 15px; color: #000; }
.menus .saving { color: #777; }
.docs-right { width: 181px; padding-top: 9px; }
.account { font-size: 10.500px; line-height: 12px; color: #555; display: flex; align-items: center; gap: 4px; padding-left: 47px; letter-spacing: .1px; white-space: nowrap; }
.buttons { display: flex; gap: 8px; margin-top: 2px; }
button { height: 27px; padding: 0; font: bold 10px/12px "Liberation Sans", sans-serif; display: flex; align-items: center; justify-content: center; }
.comments { width: 68px; background: #f4f4f4; border: 1px solid #d5d5d5; color: #333; }
.share { width: 65px; background: #4a8bf5; border: 1px solid #2f72e6; color: #fff; gap: 7px; }

/* Formatting toolbar */
.toolbar { height: 33px; flex: none; display: flex; background: linear-gradient(#f5f5f5, #ededed); border-top: 1px solid #d6d6d6; border-bottom: 1px solid #cfcfcf; color: #333; font-size: 10.200px; }
.g { display: flex; align-items: center; border-right: 1px solid #cfcfcf; flex: none; padding-bottom: 1px; }
.g svg { width: 14px; height: 14px; }
.g .dd { width: 5px; height: 3px; margin: 3px 0 0 -1px; }
.g1 { width: 151px; padding-left: 56px; gap: 10px; }
.g2 { width: 64px; padding-left: 14px; }
.g2 b { width: 37px; }
.g3 { width: 99px; padding-left: 12px; }
.g3 b { width: 70px; }
.g4 { width: 98px; padding-left: 12px; }
.g4 b { width: 69px; }
.g5 { width: 57px; padding-left: 14px; }
.g5 b { width: 30px; }
.g6 { width: 113px; padding-left: 11px; font-size: 12px; }
.g6 > b, .g6 > i, .g6 > u { width: 24px; font-weight: bold; color: #444; }
.g6 > i { font-family: "Liberation Serif", serif; padding-left: 1px; font-size: 13px; }
.colour { width: 20px; text-align: center; border-bottom: 3px solid #000; color: #000; font-size: 12.500px; line-height: 14px; margin: 5px 3px 0 -6px; }
.g7 { width: 55px; padding-left: 7px; gap: 7px; }
.g7 svg { width: 17px; }
.g8 { width: 103px; padding-left: 4px; gap: 10px; }
.g8 .pressed { width: 24px; height: 24px; border: 1px solid #ccc; background: #e6e6e6; padding: 4px; margin-right: -6px; }
.g9 { width: 41px; padding-left: 7px; gap: 6px; }
.g9 svg:first-child { width: 16px; }
.g10 { width: 124px; padding-left: 8px; gap: 9px; }
.g11 { width: 123px; padding-left: 8px; }
.g11 b { width: 33px; }
.g11 .pencil { margin: 0 8px 0 44px; }
.g12 { padding-left: 11px; border: 0; }
.g12 svg { width: 10px; height: 12px; }

.ruler { flex: none; background: #ebebeb; border-bottom: 1px solid #d3d3d3; }
.ruler text { font-size: 10px; fill: #555; text-anchor: middle; }

/* Document */
.canvas { position: relative; flex: 1; overflow: hidden; padding: 6px 0 0 173px; background: #eee; }
.page { width: 736px; height: 600px; background: #fff; border: 1px solid #cacaca; padding: 85px 0 0 85px; font: 300 14.500px/18px Lato, sans-serif; color: #000; -webkit-text-stroke: .25px #000; letter-spacing: .27px; }
ol { padding-left: 44px; list-style: none; }
li { text-indent: -22px; }
li::before { content: counter(list-item) "."; display: inline-block; width: 22px; text-indent: 0; }
li br + * { text-indent: 0; }
.thumb { position: absolute; right: 1px; top: 0; width: 8px; height: 254px; background: #bdbdbd; }
table { border-collapse: collapse; table-layout: fixed; width: 561px; margin: 38px 0 0 1px; }
td { border: 1px solid #000; vertical-align: top; padding: 5px 5px 0 5px; }
.r1 { height: 30px; }
.r2 { height: 156px; }
td ol { padding-left: 45px; }
.caret { border-left: 1px solid #000; margin-left: 1px; }

/* Dock */
.dock { position: absolute; left: 149px; top: 722px; width: 983px; height: 78px; }
.shelf { position: absolute; inset: 29px 0 0 0; background: linear-gradient(#8f8e95, #c9c9ce 55%, #dcdce0 43px, #fff 44px, #fff 45px, #98989c 46px, #aaaaae); clip-path: polygon(27px 0, 956px 0, 982px 44px, 983px 49px, 0 49px, 0 44px); }
.apps { position: relative; display: flex; padding-left: 29px; }
.apps > svg { width: 64px; height: 64px; -webkit-box-reflect: below -3px linear-gradient(transparent 80%, rgba(0,0,0,.35)); filter: drop-shadow(0 1px 1px rgba(0,0,0,.35)); }
.apps > .divider { width: 32px; overflow: visible; -webkit-box-reflect: none; filter: none; }
.running { position: absolute; left: 0; right: 0; bottom: 0; height: 4px; }
.running i { position: absolute; left: 54px; width: 14px; height: 3px; border-radius: 2px; background: #e9fbff; box-shadow: 0 0 5px 2px #8cc6ee; }
.running i:nth-child(2) { left: 374px; }
.running i:nth-child(3) { left: 758px; }
```
